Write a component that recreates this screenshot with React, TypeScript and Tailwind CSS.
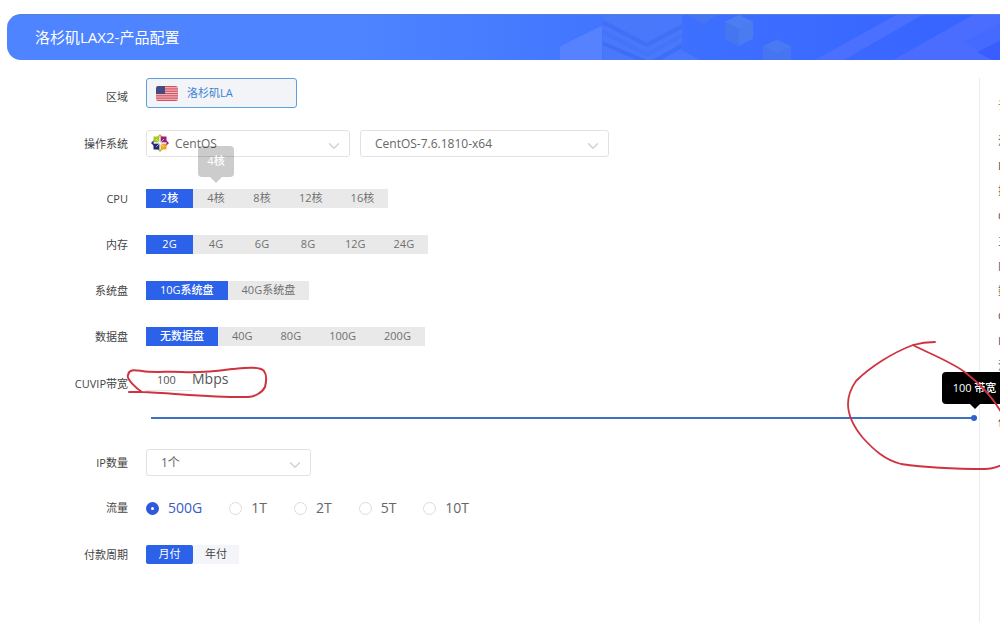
import React, { useState } from 'react';
import { ChevronDown } from 'lucide-react';

const summary = ['洛杉矶', 'DC', '操作系统', 'CPU', '主机', '内存', '数据盘', 'CUVIP', 'IP数量', '流量'];

const traffic = ['500G', '1T', '2T', '5T', '10T'];

const Label: React.FC<{ children: React.ReactNode; htmlFor?: string }> = ({ children, htmlFor }) => (
  <label htmlFor={htmlFor} className="w-32 shrink-0 text-right leading-[22px] text-[#444]">
    {children}
  </label>
);

type OptionsProps = {
  label: string;
  items: string[];
  hint?: string;
};

const Options: React.FC<OptionsProps> = ({ label, items, hint }) => {
  const [active, setActive] = useState(items[0]);

  return (
    <div className="flex h-[19px] items-center gap-[18px]">
      <Label>{label}</Label>
      <div role="group" aria-label={label} className="flex h-full bg-[#e9e9e9]">
        {items.map((item) => (
          <div key={item} className="relative h-full">
            {item === hint && (
              <div className="absolute bottom-full left-1/2 z-10 mb-3 flex h-[31px] w-9 -translate-x-1/2 items-center justify-center rounded-sm bg-black/20 font-medium text-white">
                {hint}
                <span className="absolute top-full border-x-[6px] border-t-[6px] border-x-transparent border-t-black/20"></span>
              </div>
            )}
            <button
              type="button"
              onClick={() => setActive(item)}
              className={
                item === active
                  ? 'h-full min-w-[47px] bg-[#2b62e9] px-[14px] font-medium text-white'
                  : 'h-full min-w-[46px] px-[14px] text-[#707070]'
              }
            >
              {item}
            </button>
          </div>
        ))}
      </div>
    </div>
  );
};

type DropdownProps = {
  id: string;
  value: string;
  width: string;
  indent?: string;
  icon?: React.ReactNode;
};

const Dropdown: React.FC<DropdownProps> = ({ id, value, width, indent = 'pl-[14px]', icon }) => (
  <div className={`relative h-[27px] ${width}`}>
    {icon}
    <select
      id={id}
      aria-label={value}
      className={`h-full w-full appearance-none rounded-[3px] border border-[#e2e2e2] bg-transparent text-xs text-[#666] ${indent}`}
    >
      <option>{value}</option>
    </select>
    <ChevronDown className="pointer-events-none absolute right-[7px] top-[7px] h-[18px] w-[18px] text-[#cfcfcf]" strokeWidth={1.7} />
  </div>
);

const Flag = () => (
  <svg className="h-[15px] w-[22px]" viewBox="0 0 22 15">
    <clipPath id="flag">
      <rect width="22" height="15" rx="2.5" />
    </clipPath>
    <g clipPath="url(#flag)">
      <rect width="22" height="15" fill="#f0c4cb" />
      {[0, 2.3, 4.6, 6.9, 9.2, 11.5, 13.8].map((y) => (
        <rect key={y} y={y} width="22" height="1.25" fill="#d4515f" />
      ))}
      <rect width="9" height="8" fill="#454b80" />
    </g>
  </svg>
);

const CentOSLogo = () => (
  <svg className="absolute left-[5px] top-1 h-[18px] w-[18px]" viewBox="0 0 18 18">
    <path d="M9 0l3 3H6z" fill="#efa724" />
    <path d="M18 9l-3 3V6z" fill="#932279" />
    <path d="M9 18l-3-3h6z" fill="#9ccd2a" />
    <path d="M0 9l3-3v6z" fill="#262577" />
    <rect x="2.5" y="2.5" width="6" height="6" fill="#9ccd2a" />
    <rect x="9.5" y="2.5" width="6" height="6" fill="#932279" />
    <rect x="2.5" y="9.5" width="6" height="6" fill="#262577" />
    <rect x="9.5" y="9.5" width="6" height="6" fill="#efa724" />
    <path d="M9 2v14M2 9h14M5 5l8 8M13 5L5 13" stroke="#fff" strokeWidth="0.6" />
  </svg>
);

const BannerArt = () => (
  <svg className="absolute right-0 top-0 h-full w-[440px]" viewBox="0 0 440 46" preserveAspectRatio="none">
    <path d="M0 32L42 11V46H0z" fill="#5682ff" />
    <path d="M43 0H122V36L140 46H43z" fill="#4a78fb" />
    <path d="M43 5L87 28L122 9V14L87 33L43 10z" fill="#4070f5" />
    <path d="M43 15L87 38L122 19V23L87 43L43 20z" fill="#4474f8" />
    <path d="M43 27L87 46H76L43 31zM122 29L92 46H101L122 34z" fill="#3e6ef5" />
    <path d="M129 0H157L143 10z" fill="#4575f2" />
    <path d="M179 0L193 7V24L179 32L165 24V7z" fill="#4b7bf1" />
    <path d="M165 7L179 14V32L165 24z" fill="#4675f0" />
    <path d="M179 0L193 7L179 14L165 7z" fill="#4d7df3" />
    <path d="M217 25L231 32V46H203V32z" fill="#4675f2" />
    <path d="M217 25L231 32L217 39L203 32z" fill="#4a79f3" />
    <path d="M255 46L336 0H362L284 46z" fill="#4b70ff" />
    <path d="M333 46L413 0H440V46z" fill="#4a6dff" />
    <path d="M403 28L440 8V46H434z" fill="#456aff" />
    <path d="M417 38L440 26V46H432z" fill="#3a5dff" />
  </svg>
);

const App: React.FC = () => {
  const [plan, setPlan] = useState('500G');
  const [bandwidth, setBandwidth] = useState(100);

  return (
    <div className="flex min-h-screen flex-col overflow-hidden bg-white pt-[14px] font-['Open_Sans','Noto_Sans_CJK_SC',sans-serif] text-[11px]">
      {/* Banner */}
      <header className="relative ml-[7px] flex h-[46px] items-center overflow-hidden rounded-l-[14px] border-t border-[#5a7edb] bg-linear-to-r from-[#4e84ff] from-35% via-[#3d6fff] via-70% to-[#3762ff]">
        <BannerArt />
        <h1 className="relative pl-7 text-[15px] text-white">洛杉矶LAX2-产品配置</h1>
      </header>

      <div className="flex flex-1 pt-[18px]">
        <form className="flex min-w-0 flex-1 flex-col">
          <div className="flex h-[30px] items-end gap-[18px]">
            <Label>区域</Label>
            <button
              type="button"
              className="flex h-full w-[151px] items-center gap-[9px] rounded-[3px] border border-[#5c9fdc] bg-[#f3f4f7] pl-[9px] text-[11px] text-[#3b83d4]"
            >
              <Flag />
              洛杉矶LA
            </button>
          </div>

          <div className="mt-[22px] flex h-[27px] items-center gap-[18px]">
            <Label htmlFor="os">操作系统</Label>
            <div className="flex gap-[10px]">
              <Dropdown id="os" value="CentOS" width="w-[204px]" indent="pl-7" icon={<CentOSLogo />} />
              <Dropdown id="version" value="CentOS-7.6.1810-x64" width="w-[249px]" />
            </div>
          </div>

          <div className="mt-8 flex flex-col gap-[27px]">
            <Options label="CPU" items={['2核', '4核', '8核', '12核', '16核']} hint="4核" />
            <Options label="内存" items={['2G', '4G', '6G', '8G', '12G', '24G']} />
            <Options label="系统盘" items={['10G系统盘', '40G系统盘']} />
            <Options label="数据盘" items={['无数据盘', '40G', '80G', '100G', '200G']} />
          </div>

          {/* Bandwidth */}
          <div className="relative mt-[22px] flex h-[27px] items-end gap-[18px]">
            <Label htmlFor="bandwidth">CUVIP带宽</Label>
            <div className="flex h-full items-start">
              <input
                id="bandwidth"
                value={bandwidth}
                onChange={(e) => setBandwidth(Number(e.target.value))}
                className="h-[23px] w-[46px] border-b border-[#e6e6e6] pl-[11px] text-[#555]"
              />
              <span className="text-sm leading-[22px] text-[#555]">Mbps</span>
            </div>
            <svg className="pointer-events-none absolute left-[126px] top-0 h-8 w-[144px] overflow-visible" viewBox="126 368 144 32" fill="none" stroke="#cf3340" strokeWidth="2" strokeLinecap="round" strokeLinejoin="round">
              <path d="M129 392H142C137 389 126 379 128 375C129 369 134 370 142 371C155 373 168 371 182 372C202 373 217 371 232 369C244 368 259 366 264 371C267 375 266 383 265 387C262 393 254 397 248 397C220 398 170 393 142 392" />
            </svg>
          </div>
          <div className="relative ml-[151px] mr-[2px] mt-4 flex h-[14px] items-center">
            <input
              type="range"
              min={0}
              max={100}
              value={bandwidth}
              aria-label="带宽"
              onChange={(e) => setBandwidth(Number(e.target.value))}
              className="h-[2px] w-full appearance-none bg-[#3f6fc0] [&::-webkit-slider-thumb]:h-[6px] [&::-webkit-slider-thumb]:w-[6px] [&::-webkit-slider-thumb]:appearance-none [&::-webkit-slider-thumb]:rounded-full [&::-webkit-slider-thumb]:bg-[#2f62d0]"
            />
            <div className="absolute -right-[30px] bottom-[21px] z-10 flex h-8 w-[65px] items-center justify-center whitespace-nowrap rounded-sm bg-black font-medium text-white">
              {bandwidth} 带宽
              <span className="absolute top-full border-x-[5px] border-t-[5px] border-x-transparent border-t-black"></span>
            </div>
            <svg className="pointer-events-none absolute -right-6 -top-[71px] z-20 h-[130px] w-[156px]" viewBox="845 340 156 130" fill="none" stroke="#cf3340" strokeWidth="1.8" strokeLinecap="round" strokeLinejoin="round">
              <path d="M935 342C927 342 920 343 913 345C892 353 870 367 856 381C849 391 848 399 848 404C848 416 853 426 863 438C874 450 885 460 901 464C922 467 945 469 985 469C992 469 997 467 1002 465M913 345C930 354 952 362 966 373C980 384 992 396 1001 412" />
            </svg>
          </div>

          <div className="mt-6 flex h-[27px] items-center gap-[18px]">
            <Label htmlFor="ip">IP数量</Label>
            <Dropdown id="ip" value="1个" width="w-[165px]" />
          </div>

          {/* Traffic */}
          <div className="mt-[23px] flex h-[18px] items-center gap-[18px]">
            <Label>流量</Label>
            <div className="flex items-center gap-[27px]">
              {traffic.map((item) => (
                <label
                  key={item}
                  className={`flex items-center gap-[9px] text-sm ${item === plan ? 'text-[#3a5bc4]' : 'text-[#666]'}`}
                >
                  <input
                    type="radio"
                    name="traffic"
                    checked={item === plan}
                    onChange={() => setPlan(item)}
                    className="h-[13px] w-[13px] appearance-none rounded-full border border-[#ddd] bg-white checked:border-[5px] checked:border-[#2f58dc]"
                  />
                  {item}
                </label>
              ))}
            </div>
          </div>

          <div className="mt-7 flex h-[19px] items-center gap-[18px]">
            <Label>付款周期</Label>
            <div className="flex h-full">
              <button type="button" className="h-full w-[47px] rounded-xs bg-[#2b62e9] text-white">月付</button>
              <button type="button" className="h-full w-[46px] bg-[#f4f5f8] text-[#444]">年付</button>
            </div>
          </div>
        </form>

        {/* Order summary */}
        <aside className="w-[21px] shrink-0 overflow-hidden whitespace-nowrap border-l border-[#ececec] pl-[18px] pt-4 text-[#555]">
          <h2 className="leading-6 text-[#a86a2c]">订单</h2>
          <ul className="mt-[10px]">
            {summary.map((item) => (
              <li key={item} className="leading-[25px]">{item}</li>
            ))}
          </ul>
          <p className="mt-9">价格</p>
        </aside>
      </div>
    </div>
  );
};

export default App;
